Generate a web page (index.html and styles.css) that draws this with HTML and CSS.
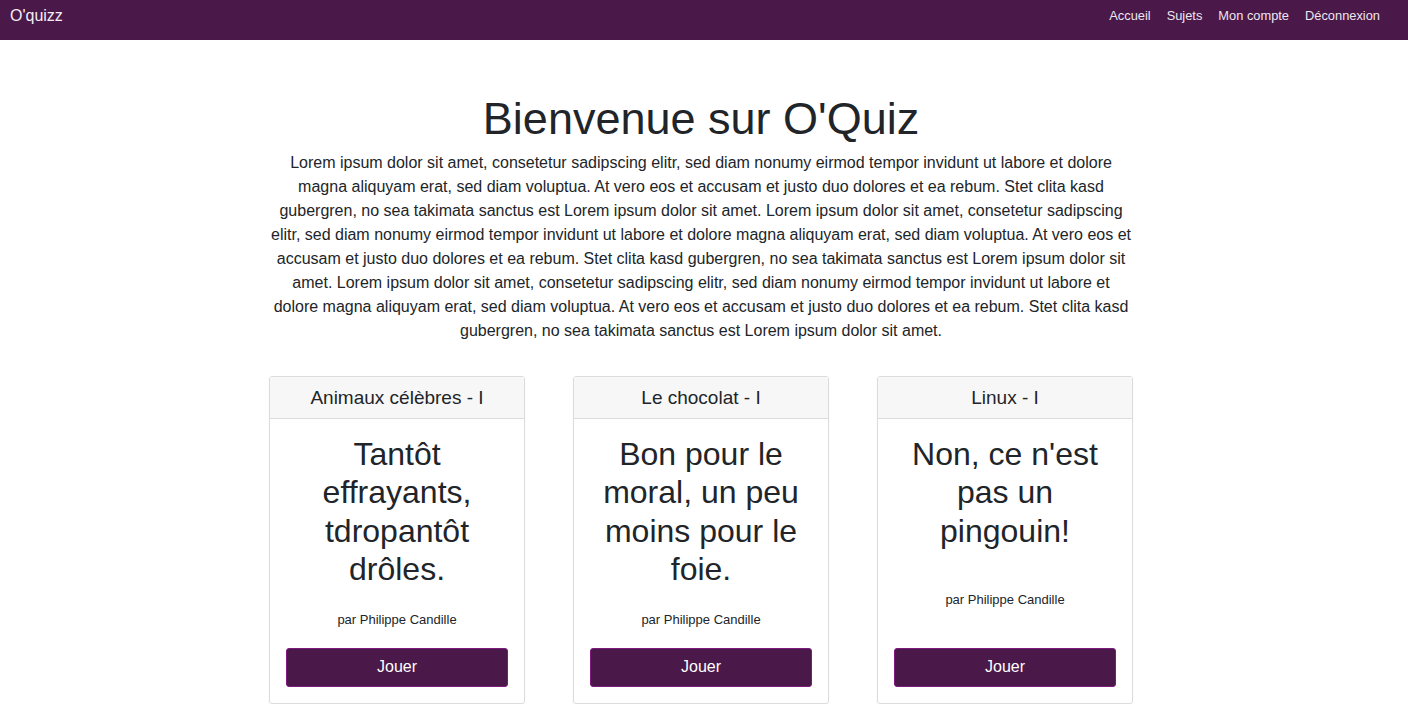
FILE: index.html
```html
<!DOCTYPE html>
<html lang="fr">
<head>
<meta charset="utf-8">
<title>O'quizz</title>
<link rel="stylesheet" href="styles.css">
</head>
<body>
<nav class="navbar">
  <a class="brand" href="#">O'quizz</a>
  <ul class="nav-links">
    <li><a href="#">Accueil</a></li>
    <li><a href="#">Sujets</a></li>
    <li><a href="#">Mon compte</a></li>
    <li><a href="#">Déconnexion</a></li>
  </ul>
</nav>
<main class="main">
  <div class="container">
    <h1 class="title">Bienvenue sur O'Quiz</h1>
    <p class="intro">Lorem ipsum dolor sit amet, consetetur sadipscing elitr, sed diam nonumy eirmod tempor invidunt ut labore et dolore magna aliquyam erat, sed diam voluptua. At vero eos et accusam et justo duo dolores et ea rebum. Stet clita kasd gubergren, no sea takimata sanctus est Lorem ipsum dolor sit amet. Lorem ipsum dolor sit amet, consetetur sadipscing elitr, sed diam nonumy eirmod tempor invidunt ut labore et dolore magna aliquyam erat, sed diam voluptua. At vero eos et accusam et justo duo dolores et ea rebum. Stet clita kasd gubergren, no sea takimata sanctus est Lorem ipsum dolor sit amet. Lorem ipsum dolor sit amet, consetetur sadipscing elitr, sed diam nonumy eirmod tempor invidunt ut labore et dolore magna aliquyam erat, sed diam voluptua. At vero eos et accusam et justo duo dolores et ea rebum. Stet clita kasd gubergren, no sea takimata sanctus est Lorem ipsum dolor sit amet.</p>
    <div class="cards">
      <div class="card">
        <div class="card-header">Animaux célèbres - I</div>
        <div class="card-body">
          <h2 class="card-title">Tantôt effrayants, tdropantôt drôles.</h2>
          <p class="author">par Philippe Candille</p>
          <a class="btn" href="#">Jouer</a>
        </div>
      </div>
      <div class="card">
        <div class="card-header">Le chocolat - I</div>
        <div class="card-body">
          <h2 class="card-title">Bon pour le moral, un peu moins pour le foie.</h2>
          <p class="author">par Philippe Candille</p>
          <a class="btn" href="#">Jouer</a>
        </div>
      </div>
      <div class="card">
        <div class="card-header">Linux - I</div>
        <div class="card-body">
          <h2 class="card-title">Non, ce n'est pas un pingouin!</h2>
          <p class="author">par Philippe Candille</p>
          <a class="btn" href="#">Jouer</a>
        </div>
      </div>
    </div>
  </div>
</main>
</body>
</html>
```
FILE: styles.css
```css
* { box-sizing: border-box; }
html, body { margin: 0; padding: 0; }
body {
  font-family: "Liberation Sans", Arial, sans-serif;
  color: #212529;
  background: #fff;
  font-size: 16px;
  line-height: 1.5;
}
a { text-decoration: none; }

.navbar {
  height: 40px;
  background: #4a1849;
  display: flex;
  align-items: flex-start;
  justify-content: space-between;
  padding: 0 28px 0 10px;
}
.brand {
  color: #f3eef3;
  font-size: 16px;
  line-height: 32px;
}
.nav-links {
  list-style: none;
  margin: 0;
  padding: 0;
  display: flex;
  gap: 16px;
}
.nav-links a {
  color: #eee6ee;
  font-size: 12.85px;
  line-height: 32px;
}

.main {
  padding-right: 6px;
}
.container {
  width: 864px;
  margin: 0 auto;
  padding-top: 52px;
}
.title {
  margin: 0;
  text-align: center;
  font-weight: 400;
  font-size: 45px;
  line-height: 54px;
}
.intro {
  margin: 5px 0 0;
  text-align: center;
  font-size: 16px;
  line-height: 24px;
}

.cards {
  display: flex;
  gap: 48px;
  margin-top: 33px;
}
.card {
  width: 256px;
  border: 1px solid #dcdcdc;
  border-radius: 3px;
  display: flex;
  flex-direction: column;
  box-shadow: 0 1px 2px rgba(0,0,0,0.05);
}
.card-header {
  background: #f7f7f7;
  border-bottom: 1px solid #dcdcdc;
  text-align: center;
  font-size: 19px;
  line-height: 24px;
  padding: 9px 8px 8px;
}
.card-body {
  flex: 1;
  display: flex;
  flex-direction: column;
  padding: 16px;
  text-align: center;
}
.card-title {
  margin: 0;
  font-weight: 400;
  font-size: 32px;
  line-height: 1.2;
}
.author {
  margin: auto 0;
  padding: 21px 0 18px;
  font-size: 13px;
  line-height: 20px;
}
.btn {
  display: block;
  height: 39px;
  background: #4a1849;
  border: 1px solid #7d1a7c;
  border-radius: 3px;
  color: #fff;
  font-size: 16px;
  line-height: 35px;
  text-align: center;
}
```
